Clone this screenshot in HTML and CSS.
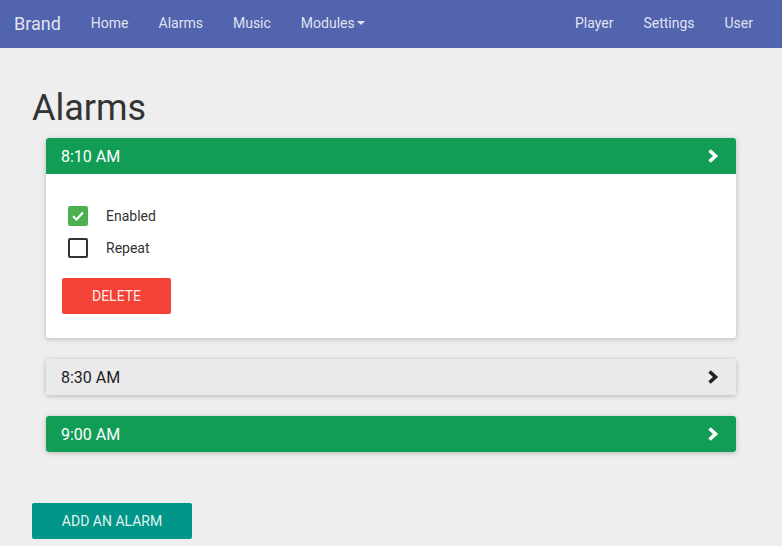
FILE: index.html
```html
<!DOCTYPE html>
<html>
<head>
<meta charset="utf-8">
<link rel="stylesheet" href="styles.css">
</head>
<body>
<nav class="navbar">
  <a class="brand">Brand</a>
  <ul class="nav">
    <li>Home</li>
    <li>Alarms</li>
    <li>Music</li>
    <li>Modules<span class="caret"></span></li>
  </ul>
  <ul class="nav nav-right">
    <li>Player</li>
    <li>Settings</li>
    <li>User</li>
  </ul>
</nav>
<main class="container">
  <h1>Alarms</h1>
  <div class="alarms">
    <section class="card open">
      <div class="card-head green">
        <span>8:10 AM</span>
        <svg class="chev" width="14" height="16" viewBox="0 0 14 16"><path d="M3.5 2.5 L9.5 8 L3.5 13.5" fill="none" stroke="currentColor" stroke-width="3.6" stroke-linejoin="miter"/></svg>
      </div>
      <div class="card-body">
        <label class="check"><span class="box on"><svg width="16" height="16" viewBox="0 0 16 16"><path d="M3 8.2 L6.5 11.5 L13 4.5" fill="none" stroke="#fff" stroke-width="2.2"/></svg></span>Enabled</label>
        <label class="check"><span class="box"></span>Repeat</label>
        <button class="btn btn-delete">DELETE</button>
      </div>
    </section>
    <section class="card">
      <div class="card-head grey">
        <span>8:30 AM</span>
        <svg class="chev" width="14" height="16" viewBox="0 0 14 16"><path d="M3.5 2.5 L9.5 8 L3.5 13.5" fill="none" stroke="currentColor" stroke-width="3.6" stroke-linejoin="miter"/></svg>
      </div>
    </section>
    <section class="card">
      <div class="card-head green">
        <span>9:00 AM</span>
        <svg class="chev" width="14" height="16" viewBox="0 0 14 16"><path d="M3.5 2.5 L9.5 8 L3.5 13.5" fill="none" stroke="currentColor" stroke-width="3.6" stroke-linejoin="miter"/></svg>
      </div>
    </section>
  </div>
  <button class="btn btn-add">ADD AN ALARM</button>
</main>
</body>
</html>
```
FILE: styles.css
```css
* { box-sizing: border-box; }
body {
  margin: 0;
  background: #eeeeee;
  font-family: Roboto, "Liberation Sans", sans-serif;
  color: #333;
}
.navbar {
  height: 48px;
  background: #5264ae;
  display: flex;
  align-items: center;
  padding: 0 14px 2px 14px;
  color: rgba(255,255,255,0.84);
}
.brand {
  font-size: 18px;
  margin-right: 15px;
}
.nav {
  list-style: none;
  margin: 0;
  padding: 0;
  display: flex;
  font-size: 14px;
}
.nav li {
  padding: 0 15px;
  display: flex;
  align-items: center;
}
.nav-right { margin-left: auto; }
.caret {
  display: inline-block;
  width: 0; height: 0;
  border-left: 4px solid transparent;
  border-right: 4px solid transparent;
  border-top: 4px solid currentColor;
  margin-left: 2px;
}
.container {
  padding: 40px 32px 0 32px;
}
h1 {
  margin: 0 0 10px 0;
  font-size: 36px;
  font-weight: 400;
  line-height: 40px;
  color: #333;
}
.alarms {
  padding: 0 14px 0 14px;
  display: flex;
  flex-direction: column;
  gap: 21px;
}
.card {
  border-radius: 3px;
  box-shadow: 0 1px 6px rgba(0,0,0,0.12), 0 1px 4px rgba(0,0,0,0.12);
  background: #fff;
  overflow: hidden;
}
.card-head {
  height: 36px;
  display: flex;
  align-items: center;
  justify-content: space-between;
  padding: 0 15px;
  font-size: 16px;
}
.green { background: #129d57; color: #fff; }
.grey { background: #eaeaea; color: #222; }
.chev { margin-right: 1px; }
.card-body {
  padding: 32px 16px 24px 16px;
}
.check {
  display: flex;
  align-items: center;
  font-size: 14px;
  color: #333;
  height: 20px;
  margin-bottom: 12px;
}
.check + .check { margin-bottom: 20px; }
.box {
  width: 20px; height: 20px;
  margin: 0 18px 0 6px;
  border: 2px solid #333;
  border-radius: 2px;
  display: flex;
  align-items: center;
  justify-content: center;
}
.box.on { background: #4caf50; border-color: #4caf50; }
.btn {
  border: 0;
  border-radius: 2px;
  font-family: Roboto, "Liberation Sans", sans-serif;
  font-size: 14px;
  color: rgba(255,255,255,0.9);
  height: 36px;
  display: block;
}
.btn-delete {
  background: #f44336;
  width: 109px;
}
.btn-add {
  background: #009688;
  width: 160px;
  margin-top: 51px;
}
```
